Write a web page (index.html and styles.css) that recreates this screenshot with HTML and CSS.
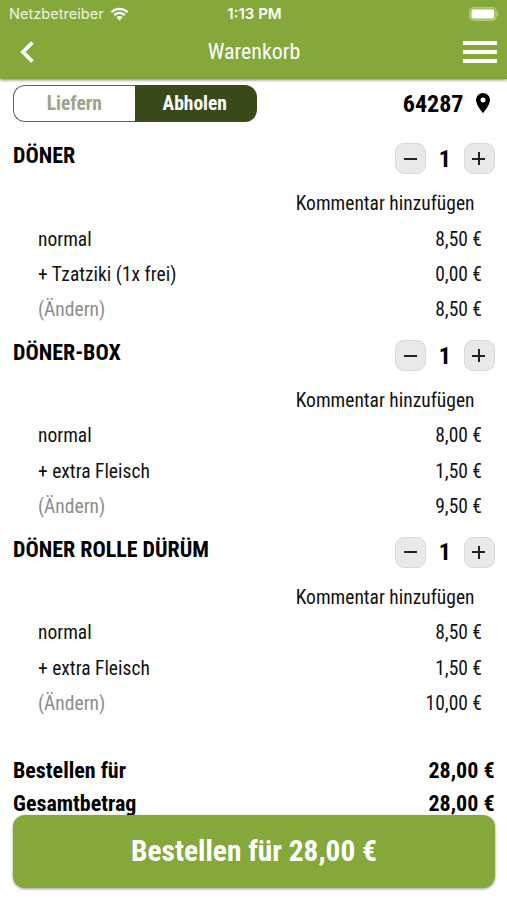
FILE: index.html
```html
<!DOCTYPE html>
<html lang="de">
<head>
  <meta charset="UTF-8" />
  <meta name="viewport" content="width=device-width, initial-scale=1.0"/>
  <title>Warenkorb</title>
  <link rel="stylesheet" href="styles.css">
</head>
<body>
  <header class="header">
    <div class="status-bar">
      <div class="carrier">
        <span>Netzbetreiber</span>
        <svg class="wifi" viewBox="0 0 18 14">
          <path d="M1 5.2a11.3 11.3 0 0 1 16 0M3.8 8.1a7.3 7.3 0 0 1 10.4 0" fill="none" stroke="#fff" stroke-width="2.3"/>
          <path d="M9 13.4L5.9 10.3a4.4 4.4 0 0 1 6.2 0z" fill="#fff"/>
        </svg>
      </div>
      <div class="clock">1:13 PM</div>
      <div class="battery-wrap">
        <svg class="battery" viewBox="0 0 31 14">
          <rect x="0.6" y="0.6" width="26.8" height="12.8" rx="4" fill="#a3c15f" stroke="#b4cd80" stroke-width="1"/>
          <rect x="2.5" y="2.5" width="22.5" height="9" rx="2" fill="#fff"/>
          <path d="M28.6 4.8c1.8.8 1.8 3.6 0 4.4z" fill="#b4cd80"/>
        </svg>
      </div>
    </div>
    <nav class="nav-bar">
      <svg class="back" viewBox="0 0 14 22"><path d="M12.4 1.5L3 11l9.4 9.5" fill="none" stroke="#fff" stroke-width="3.8"/></svg>
      <h1 class="title">Warenkorb</h1>
      <div class="menu"><i></i><i></i><i></i></div>
    </nav>
  </header>

  <main class="cart">
    <div class="options">
      <div class="toggle">
        <div class="toggle-item"><span>Liefern</span></div>
        <div class="toggle-item active"><span>Abholen</span></div>
      </div>
      <div class="location">
        <span class="zip">64287</span>
        <svg class="pin" viewBox="0 0 14 20"><path fill="#000" fill-rule="evenodd" d="M7 0a7 7 0 0 0-7 7c0 5.2 7 13 7 13s7-7.8 7-13a7 7 0 0 0-7-7zm0 4.5a2.5 2.5 0 1 1 0 5 2.5 2.5 0 0 1 0-5z"/></svg>
      </div>
    </div>

    <section class="item">
      <div class="item-head">
        <h2 class="name">DÖNER</h2>
        <div class="stepper">
          <button class="minus"></button><span class="count">1</span><button class="plus"></button>
        </div>
      </div>
      <div class="comment"><span>Kommentar hinzufügen</span></div>
      <div class="row"><span>normal</span><span class="price">8,50 €</span></div>
      <div class="row"><span>+ Tzatziki (1x frei)</span><span class="price">0,00 €</span></div>
      <div class="row"><span class="change">(Ändern)</span><span class="price">8,50 €</span></div>
    </section>

    <section class="item">
      <div class="item-head">
        <h2 class="name">DÖNER-BOX</h2>
        <div class="stepper">
          <button class="minus"></button><span class="count">1</span><button class="plus"></button>
        </div>
      </div>
      <div class="comment"><span>Kommentar hinzufügen</span></div>
      <div class="row"><span>normal</span><span class="price">8,00 €</span></div>
      <div class="row"><span>+ extra Fleisch</span><span class="price">1,50 €</span></div>
      <div class="row"><span class="change">(Ändern)</span><span class="price">9,50 €</span></div>
    </section>

    <section class="item">
      <div class="item-head">
        <h2 class="name">DÖNER ROLLE DÜRÜM</h2>
        <div class="stepper">
          <button class="minus"></button><span class="count">1</span><button class="plus"></button>
        </div>
      </div>
      <div class="comment"><span>Kommentar hinzufügen</span></div>
      <div class="row"><span>normal</span><span class="price">8,50 €</span></div>
      <div class="row"><span>+ extra Fleisch</span><span class="price">1,50 €</span></div>
      <div class="row"><span class="change">(Ändern)</span><span class="price">10,00 €</span></div>
    </section>

    <section class="totals">
      <div class="total"><span>Bestellen für</span><span class="price">28,00 €</span></div>
      <div class="total"><span>Gesamtbetrag</span><span class="price">28,00 €</span></div>
    </section>
  </main>

  <button class="order"><span>Bestellen für 28,00 €</span></button>
</body>
</html>
```
FILE: styles.css
```css
* {
  box-sizing: border-box;
}

body {
  margin: 0;
  height: 900px;
  overflow: hidden;
  display: flex;
  flex-direction: column;
  font-family: "Roboto Condensed", Roboto, sans-serif;
  font-stretch: 75%;
  font-size: 19.5px;
  color: #111;
  background-color: #fff;
}

h1, h2 {
  margin: 0;
}

button {
  font: inherit;
  border: none;
  padding: 0;
}

.header {
  height: 79px;
  flex-shrink: 0;
  color: #fff;
  background-color: #84a83a;
  box-shadow: 0 1px 3px rgba(0, 0, 0, 0.5);
}

.status-bar {
  display: grid;
  grid-template-columns: 1fr auto 1fr;
  align-items: center;
  height: 27px;
  padding: 0 7px 0 9px;
  font-family: Inter, sans-serif;
  font-stretch: normal;
  font-size: 14.6px;
}

.carrier {
  display: flex;
  align-items: center;
  gap: 6px;
  color: #eef3e2;
}

.wifi {
  width: 19px;
  height: 14px;
}

.clock {
  font-size: 15px;
  font-weight: 600;
}

.battery-wrap {
  display: flex;
  justify-content: flex-end;
}

.battery {
  width: 31px;
  height: 14px;
}

.nav-bar {
  display: grid;
  grid-template-columns: 1fr auto 1fr;
  align-items: center;
  height: 50px;
  padding: 0 10px 0 20px;
}

.back {
  width: 14px;
  height: 22px;
}

.title {
  padding: 0 9px 1px 0;
  font-size: 21.9px;
  font-weight: 400;
}

.menu {
  justify-self: end;
  display: flex;
  flex-direction: column;
  gap: 5px;
  width: 34px;
}

.menu i {
  height: 4px;
  background-color: #fff;
}

.cart {
  flex-shrink: 0;
  padding: 6px 12.5px 0 13px;
}

.options {
  display: flex;
  justify-content: space-between;
  align-items: center;
  height: 37px;
  margin-bottom: 8.4px;
}

.toggle {
  display: flex;
  width: 244px;
  height: 37px;
}

.toggle-item {
  flex: 1;
  display: flex;
  align-items: center;
  justify-content: center;
  border: 1.5px solid #5b6a3d;
  border-right: none;
  border-radius: 12px 0 0 12px;
  font-weight: 700;
  color: #9ca58b;
}

.active {
  border: none;
  border-radius: 0 12px 12px 0;
  padding-right: 2px;
  color: #fff;
  background-color: #3a4919;
}

.location {
  display: flex;
  align-items: center;
  gap: 12px;
  padding-right: 5px;
}

.zip {
  font-size: 24px;
  font-weight: 700;
  color: #000;
}

.pin {
  width: 14px;
  height: 20px;
  margin-bottom: 2px;
}

.item-head {
  display: flex;
  justify-content: space-between;
  height: 55.4px;
  padding-top: 13px;
}

.name {
  font-size: 22px;
  line-height: 26px;
  font-weight: 700;
  color: #000;
}

.stepper {
  display: flex;
  align-items: center;
  height: 31px;
}

.minus,
.plus {
  width: 31px;
  height: 31px;
  border: 1px solid #d9d9d9;
  border-radius: 9px;
  background: linear-gradient(#222, #222) 8px 13.5px / 13px 2px no-repeat #e9e9e9;
}

.plus {
  background: linear-gradient(#222, #222) 7.5px 13.5px / 13px 2px no-repeat,
    linear-gradient(#222, #222) 13px 8px / 2px 13px no-repeat #e9e9e9;
}

.count {
  width: 37.5px;
  text-align: center;
  font-size: 24px;
  font-weight: 700;
  color: #000;
}

.comment {
  display: flex;
  align-items: center;
  justify-content: flex-end;
  height: 35.3px;
  padding: 1px 20px 0 0;
}

.row {
  display: flex;
  align-items: center;
  justify-content: space-between;
  height: 35.35px;
  padding: 1px 12.5px 0 25px;
}

.change {
  color: #8c8c8c;
}

.totals {
  margin-top: 33.5px;
}

.total {
  display: flex;
  align-items: center;
  justify-content: space-between;
  height: 33px;
  font-size: 22px;
  font-weight: 700;
  color: #000;
}

.order {
  position: absolute;
  left: 13px;
  right: 12px;
  bottom: 12px;
  height: 73px;
  padding-bottom: 2px;
  border-radius: 12px;
  font-size: 29.4px;
  font-weight: 700;
  color: #fff;
  background-color: #84a83a;
  box-shadow: 0 1px 3px rgba(0, 0, 0, 0.4);
}
```
